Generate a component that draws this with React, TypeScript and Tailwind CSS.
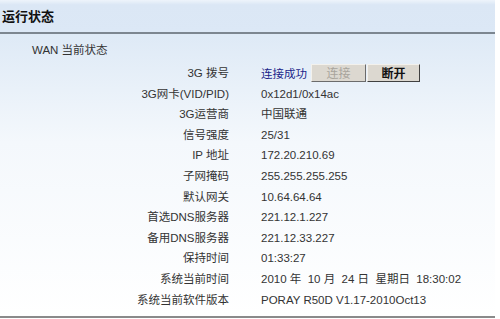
import React from 'react';

const rows: { label: string; value: string }[] = [
  { label: '3G网卡(VID/PID)', value: '0x12d1/0x14ac' },
  { label: '3G运营商', value: '中国联通' },
  { label: '信号强度', value: '25/31' },
  { label: 'IP 地址', value: '172.20.210.69' },
  { label: '子网掩码', value: '255.255.255.255' },
  { label: '默认网关', value: '10.64.64.64' },
  { label: '首选DNS服务器', value: '221.12.1.227' },
  { label: '备用DNS服务器', value: '221.12.33.227' },
  { label: '保持时间', value: '01:33:27' },
  { label: '系统当前时间', value: '2010 年  10 月  24 日  星期日  18:30:02' },
  { label: '系统当前软件版本', value: 'PORAY R50D V1.17-2010Oct13' },
];

export default function App() {
  return (
    <div
      className="h-[319px] w-[500px] overflow-hidden bg-white text-[11.5px] text-[#333]"
      style={{ fontFamily: '"Liberation Sans", "Noto Sans CJK SC", sans-serif' }}
    >
      <div className="h-[318px] w-[495px] bg-gradient-to-b from-[#d7e5f4] via-[#f4f8fc] via-45% to-white border-b-2 border-[#8a8a8a]">
        {/* header */}
        <div className="flex h-[34px] items-center border-b-2 border-b-[#7c8690] bg-gradient-to-b from-[#eef4fb] from-0% via-[#dbe7f5] via-15% to-[#dce8f6] pl-[2px] pt-[1px]">
          <span className="text-[13px] font-bold text-[#111]">运行状态</span>
        </div>

        <div className="pl-[32px] pt-[6px] h-[27px] flex items-center">WAN 当前状态</div>

        <div className="grid grid-cols-[229px_1fr] gap-x-[32px] pt-[1px]">
          {/* dial row */}
          <div className="flex h-[22px] items-center justify-end pt-[2px]">3G 拨号</div>
          <div className="flex h-[22px] items-center">
            <span className="mt-[3px] text-[#1b1f8a]">连接成功</span>
            <button
              disabled
              className="ml-[4px] h-[18px] w-[55px] border border-[#f3f1ec] border-r-[#6b6b6b] border-b-[#6b6b6b] bg-[#dcd8d0] text-[12px] text-[#a8a49c]"
            >
              连接
            </button>
            <button className="ml-[1px] h-[18px] w-[53px] border border-[#f3f1ec] border-r-[#404040] border-b-[#404040] bg-[#dcd8d0] text-[12px] font-bold text-[#111]">
              断开
            </button>
          </div>

          {rows.map((r) => (
            <React.Fragment key={r.label}>
              <div className="flex h-[20.6px] items-center justify-end">{r.label}</div>
              <div className="flex h-[20.6px] items-center whitespace-pre">{r.value}</div>
            </React.Fragment>
          ))}
        </div>
      </div>
    </div>
  );
}
